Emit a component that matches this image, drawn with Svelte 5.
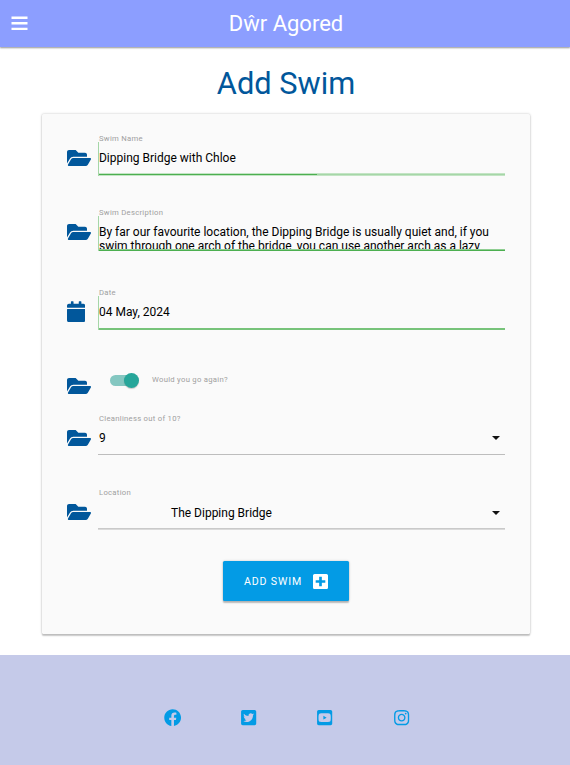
<script>
  const folder = 'M572.694 292.093L500.27 416.248A63.997 63.997 0 0 1 444.989 448H45.025c-18.523 0-30.064-20.093-20.731-36.093l72.424-124.155A64 64 0 0 1 152 256h399.964c18.523 0 30.064 20.093 20.73 36.093zM152 224h328v-48c0-26.51-21.49-48-48-48H272l-64-64H48C21.49 64 0 85.49 0 112v278.046l69.077-118.418C86.214 242.25 117.989 224 152 224z';
  const calendar = 'M12 192h424c6.6 0 12 5.4 12 12v260c0 26.5-21.5 48-48 48H48c-26.5 0-48-21.5-48-48V204c0-6.6 5.4-12 12-12zm436-44v-36c0-26.5-21.5-48-48-48h-48V12c0-6.6-5.4-12-12-12h-40c-6.6 0-12 5.4-12 12v52H160V12c0-6.6-5.4-12-12-12h-40c-6.6 0-12 5.4-12 12v52H48C21.5 64 0 85.5 0 112v36c0 6.6 5.4 12 12 12h424c6.6 0 12-5.4 12-12z';
  const plus = 'M400 32H48C21.5 32 0 53.5 0 80v352c0 26.5 21.5 48 48 48h352c26.5 0 48-21.5 48-48V80c0-26.5-21.5-48-48-48zm-32 252c0 6.6-5.4 12-12 12h-92v92c0 6.6-5.4 12-12 12h-56c-6.6 0-12-5.4-12-12v-92H92c-6.6 0-12-5.4-12-12v-56c0-6.6 5.4-12 12-12h92v-92c0-6.6 5.4-12 12-12h56c6.6 0 12 5.4 12 12v92h92c6.6 0 12 5.4 12 12v56z';
  const socials = [
    { name: 'Facebook', box: '0 0 512 512', d: 'M504 256C504 119 393 8 256 8S8 119 8 256c0 123.78 90.69 226.38 209.25 245V327.69h-63V256h63v-54.64c0-62.15 37-96.48 93.67-96.48 27.14 0 55.52 4.84 55.52 4.84v61h-31.28c-30.8 0-40.41 19.12-40.41 38.73V256h68.78l-11 71.69h-57.78V501C413.31 482.38 504 379.78 504 256z' },
    { name: 'Twitter', box: '-32 0 512 512', d: 'M400 32H48C21.5 32 0 53.5 0 80v352c0 26.5 21.5 48 48 48h352c26.5 0 48-21.5 48-48V80c0-26.5-21.5-48-48-48zm-48.9 158.8c.2 2.8.2 5.7.2 8.5 0 86.7-66 186.6-186.6 186.6-37.2 0-71.7-10.8-100.7-29.4 5.3.6 10.4.8 15.8.8 30.7 0 58.9-10.4 81.4-28-28.8-.6-53-19.5-61.3-45.5 10.1 1.5 19.2 1.5 29.6-1.2-30-6.1-52.5-32.5-52.5-64.4v-.8c8.7 4.9 18.9 7.9 29.6 8.3a65.447 65.447 0 0 1-29.2-54.6c0-12.2 3.2-23.4 8.9-33.1 32.3 39.8 80.8 65.8 135.2 68.6-9.3-44.5 24-80.6 64-80.6 18.9 0 35.9 7.9 47.9 20.7 14.8-2.8 29-8.3 41.6-15.8-4.9 15.2-15.2 28-28.8 36.1 13.2-1.4 26-5.1 37.8-10.2-8.9 13.1-20.1 24.7-32.9 34z' },
    { name: 'YouTube', box: '-32 0 512 512', d: 'M186.8 202.1l95.2 54.1-95.2 54.1V202.1zM448 80v352c0 26.5-21.5 48-48 48H48c-26.5 0-48-21.5-48-48V80c0-26.5 21.5-48 48-48h352c26.5 0 48 21.5 48 48zm-42 176.3s0-59.6-7.6-88.2c-4.2-15.8-16.5-28.2-32.2-32.4C337.9 128 224 128 224 128s-113.9 0-142.2 7.7c-15.7 4.2-28 16.6-32.2 32.4-7.6 28.5-7.6 88.2-7.6 88.2s0 59.6 7.6 88.2c4.2 15.8 16.5 27.7 32.2 31.9C110.1 384 224 384 224 384s113.9 0 142.2-7.7c15.7-4.2 28-16.1 32.2-31.9 7.6-28.5 7.6-88.1 7.6-88.1z' },
    { name: 'Instagram', box: '-32 0 512 512', d: 'M224.1 141c-63.6 0-114.9 51.3-114.9 114.9s51.3 114.9 114.9 114.9S339 319.5 339 255.9 287.7 141 224.1 141zm0 189.6c-41.1 0-74.7-33.5-74.7-74.7s33.5-74.7 74.7-74.7 74.7 33.5 74.7 74.7-33.6 74.7-74.7 74.7zm146.4-194.3c0 14.9-12 26.8-26.8 26.8-14.9 0-26.8-12-26.8-26.8s12-26.8 26.8-26.8 26.8 12 26.8 26.8zm76.1 27.2c-1.7-35.9-9.9-67.7-36.2-93.9-26.2-26.2-58-34.4-93.9-36.2-37-2.1-147.9-2.1-184.9 0-35.8 1.7-67.6 9.9-93.9 36.1s-34.4 58-36.2 93.9c-2.1 37-2.1 147.9 0 184.9 1.7 35.9 9.9 67.7 36.2 93.9s58 34.4 93.9 36.2c37 2.1 147.9 2.1 184.9 0 35.9-1.7 67.7-9.9 93.9-36.2 26.2-26.2 34.4-58 36.2-93.9 2.1-37 2.1-147.8 0-184.8zM398.8 388c-7.8 19.6-22.9 34.7-42.6 42.6-29.5 11.7-99.5 9-132.1 9s-102.7 2.6-132.1-9c-19.6-7.8-34.7-22.9-42.6-42.6-11.7-29.5-9-99.5-9-132.1s-2.6-102.7 9-132.1c7.8-19.6 22.9-34.7 42.6-42.6 29.5-11.7 99.5-9 132.1-9s102.7-2.6 132.1 9c19.6 7.8 34.7 22.9 42.6 42.6 11.7 29.5 9 99.5 9 132.1s2.7 102.7-9 132.1z' }
  ];
</script>

{#snippet folderIcon()}
  <svg class="icon" viewBox="0 64 576 384" width="24" height="16" aria-hidden="true"><path d={folder} /></svg>
{/snippet}

<div class="page">
  <header>
    <svg class="menu" viewBox="0 0 17 15" width="17" height="15" aria-label="Menu">
      <path d="M.5.5h16v2.4H.5zM.5 6.1h16v2.4H.5zM.5 11.7h16v2.4H.5z" />
    </svg>
    <span class="brand">Dŵr Agored</span>
  </header>

  <main>
    <h1>Add Swim</h1>
    <form class="card" onsubmit={(e) => e.preventDefault()}>
      <div class="row">
        {@render folderIcon()}
        <div class="body">
          <span class="label">Swim Name</span>
          <div class="field valid name">Dipping Bridge with Chloe</div>
        </div>
      </div>
      <div class="row tall">
        {@render folderIcon()}
        <div class="body">
          <span class="label">Swim Description</span>
          <div class="field valid area">
            <div class="clip">By far our favourite location, the Dipping Bridge is usually quiet and, if you<br />swim through one arch of the bridge, you can use another arch as a lazy</div>
          </div>
        </div>
      </div>
      <div class="row">
        <svg class="icon cal" viewBox="0 0 448 512" width="18.7" height="21.3" aria-hidden="true"><path d={calendar} /></svg>
        <div class="body">
          <span class="label">Date</span>
          <div class="field valid date">04 May, 2024</div>
        </div>
      </div>
      <div class="row short">
        {@render folderIcon()}
        <div class="toggle">
          <span class="track"><span class="knob"></span></span>
          <span class="label">Would you go again?</span>
        </div>
      </div>
      <div class="row">
        {@render folderIcon()}
        <div class="body">
          <span class="label">Cleanliness out of 10?</span>
          <div class="field select"><span>9</span><svg width="8" height="4" viewBox="0 0 8 4"><path d="M0 0h8L4 4z" /></svg></div>
        </div>
      </div>
      <div class="row">
        {@render folderIcon()}
        <div class="body">
          <span class="label">Location</span>
          <div class="field select soft"><span class="place">The Dipping Bridge</span><svg width="8" height="4" viewBox="0 0 8 4"><path d="M0 0h8L4 4z" /></svg></div>
        </div>
      </div>
      <button type="submit">
        <span>ADD SWIM</span>
        <svg viewBox="0 32 448 448" width="15" height="15" aria-hidden="true"><path d={plus} /></svg>
      </button>
    </form>
  </main>

  <footer>
    {#each socials as s}
      <svg viewBox={s.box} width="17.3" height="17.3" aria-label={s.name}><path d={s.d} /></svg>
    {/each}
  </footer>
</div>

<style>
  :global(body) { margin: 0; background: #fff; }
  .page {
    width: 570px;
    height: 765px;
    display: flex;
    flex-direction: column;
    overflow: hidden;
    font-family: Roboto, "Liberation Sans", sans-serif;
    color: #000;
  }
  svg { display: block; fill: currentColor; flex: none; }
  header {
    height: 47.4px;
    flex: none;
    box-sizing: border-box;
    display: grid;
    grid-template-columns: 28px 1fr 26px;
    align-items: center;
    background: #8c9eff;
    color: #fff;
    box-shadow: 0 1px 1.5px rgba(0, 0, 0, .3), 0 1px 2px rgba(0, 0, 0, .14);
  }
  .menu { margin-left: 11px; }
  .brand { text-align: center; font-size: 22px; line-height: 47px; }
  main { height: 607.4px; flex: none; }
  h1 {
    box-sizing: border-box;
    margin: 0;
    padding: 18px 0 0 2px;
    height: 66.6px;
    line-height: 37px;
    font-size: 30.8px;
    font-weight: 400;
    text-align: center;
    color: #01579b;
  }
  .card {
    box-sizing: border-box;
    width: 488.6px;
    height: 520px;
    margin-left: 41.6px;
    padding: 18px 25px 0 25.4px;
    background: #fafafa;
    border-radius: 1.5px;
    box-shadow: 0 1.5px 1.5px rgba(0, 0, 0, .2), 0 0 2.5px rgba(0, 0, 0, .24);
  }
  .row { height: 74px; display: flex; }
  .row.tall { height: 80px; }
  .row.short { height: 52px; }
  .icon { margin: 18.3px 7px 0 0; color: #01579b; }
  .icon.cal { width: 18.3px; margin: 15.3px 12.7px 0 0; }
  .body { width: 407px; }
  .label {
    display: block;
    height: 10px;
    padding-left: 1px;
    line-height: 14px;
    font-size: 7.7px;
    letter-spacing: .28px;
    color: #a0a0a0;
    white-space: nowrap;
  }
  .field {
    box-sizing: border-box;
    height: 33px;
    font-size: 12px;
    line-height: 32px;
    white-space: nowrap;
    border-bottom: 1px solid #bdbdbd;
  }
  .field.valid { border: 0; border-left: 1px solid #a5d6a7; }
  .field.name {
    height: 34px;
    background:
      linear-gradient(#4caf50, #4caf50) 0 32px / 218px 1px no-repeat,
      linear-gradient(#c3e4c4 1px, #a5d6a7 1px, #a5d6a7 2px, #c3e4c4 2px) 0 31px / 100% 3px no-repeat;
  }
  .field.area {
    height: 35px;
    line-height: 14px;
    background: linear-gradient(#8fce92 1px, #4caf50 1px) 0 33px / 100% 2px no-repeat;
  }
  .clip { box-sizing: border-box; height: 33px; padding-top: 9px; overflow: hidden; }
  .field.date {
    height: 34px;
    background: linear-gradient(#77c37a, #77c37a) 0 100% / 100% 2px no-repeat;
  }
  .select { display: flex; justify-content: space-between; align-items: center; padding: 0 5px 0 1px; }
  .select svg { color: #111; margin-top: 1px; }
  .field.soft {
    height: 34px;
    line-height: 34px;
    border: 0;
    background: linear-gradient(#c9c9c9 1px, #dadada 1px) 0 100% / 100% 2px no-repeat;
  }
  .place { padding-left: 72px; }
  .toggle { display: flex; align-items: center; height: 40.6px; padding-left: 12.5px; }
  .track { position: relative; width: 27px; height: 11px; border-radius: 6px; background: #84c7c1; }
  .knob {
    position: absolute;
    top: -2px;
    right: -1.6px;
    width: 15px;
    height: 15px;
    border-radius: 50%;
    background: #26a69a;
    box-shadow: 0 1px 1px rgba(0, 0, 0, .2);
  }
  .toggle .label { margin-left: 14.5px; height: 14px; padding: 0; line-height: 13px; }
  button {
    display: flex;
    align-items: center;
    justify-content: center;
    gap: 11px;
    width: 126px;
    height: 40.5px;
    margin: 1px 0 0 156px;
    padding: 0;
    border: 0;
    border-radius: 1.5px;
    background: #039be5;
    color: #fff;
    font: 400 10.6px/14px Roboto, "Liberation Sans", sans-serif;
    letter-spacing: .85px;
    box-shadow: 0 1.5px 1.5px rgba(0, 0, 0, .24), 0 0 2.5px rgba(0, 0, 0, .2);
  }
  button span { padding-top: 1px; }
  footer {
    flex: 1;
    box-sizing: border-box;
    display: flex;
    align-items: center;
    justify-content: center;
    gap: 58.9px;
    padding: 15px 0 0 4px;
    background: #c5cae9;
    color: #039be5;
  }
</style>
